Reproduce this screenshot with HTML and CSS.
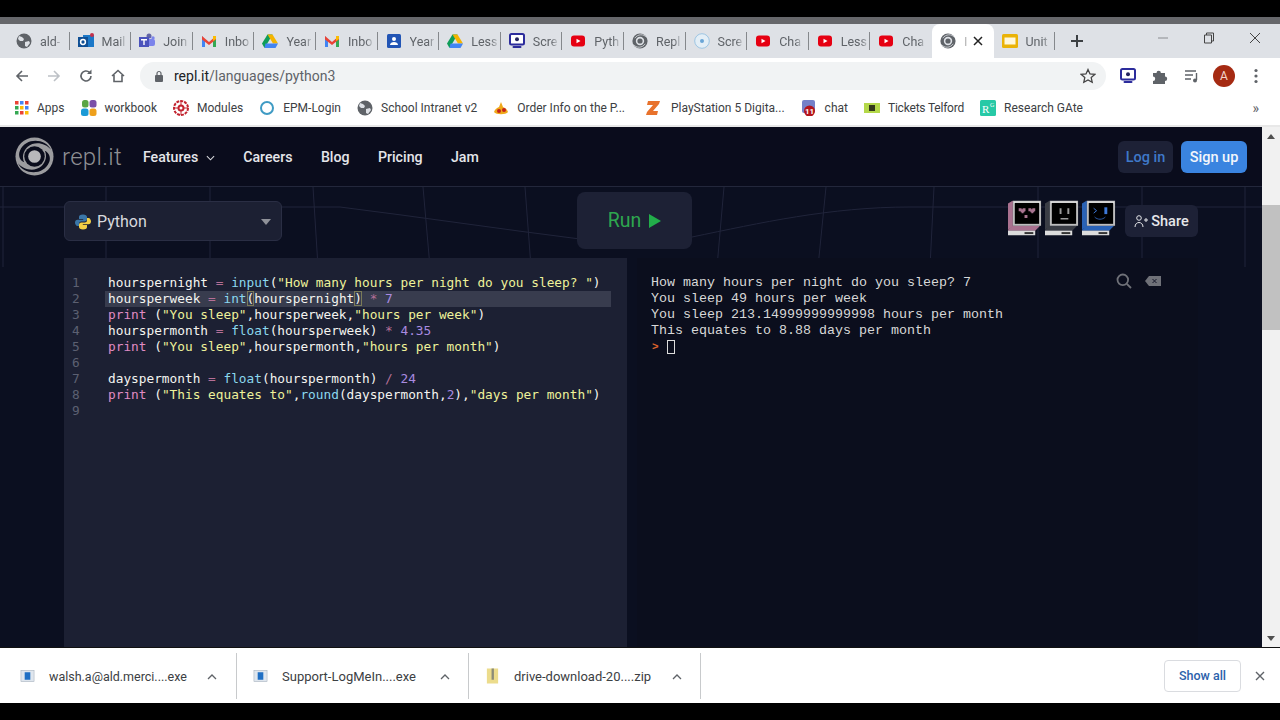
FILE: index.html
```html
<!DOCTYPE html>
<html lang="en">
<head>
  <meta charset="UTF-8">
  <title>repl.it - Python3</title>
  <link rel="stylesheet" href="styles.css">
</head>
<body>
  <svg class="defs" width="0" height="0">
    <symbol id="globe" viewBox="0 0 16 16"><circle cx="8" cy="8" r="7.5" fill="#5f6368"/><path d="M3 3l3 1 2 2-1 2-3 0-2-2zM9 9l4-1 1 2-3 4-2-1z" fill="#dee1e6"/></symbol>
    <symbol id="outlook" viewBox="0 0 16 16"><rect x="5" y="2" width="11" height="12" fill="#1b78c8"/><rect x="0" y="4" width="10" height="10" fill="#0f4f94"/><circle cx="5" cy="9" r="2.4" fill="none" stroke="#fff" stroke-width="1.5"/><circle cx="14" cy="2" r="2" fill="#c4314b"/></symbol>
    <symbol id="teams" viewBox="0 0 16 16"><circle cx="10" cy="3" r="2.5" fill="#6264a7"/><circle cx="14" cy="5" r="1.7" fill="#7b83eb"/><rect x="8" y="6" width="8" height="7" rx="2" fill="#7b83eb"/><rect x="0" y="4" width="10" height="10" fill="#4b53bc"/><path d="M2 6h6v1.400H5.700V12H4.300V7.400H2z" fill="#fff"/></symbol>
    <symbol id="gmail" viewBox="0 0 16 16"><path d="M1 3v11h3V7z" fill="#4285f4"/><path d="M15 3v11h-3V7z" fill="#34a853"/><path d="M1 3l7 6 7-6v3.500L8 12 1 6.500z" fill="#ea4335"/><path d="M12 3h3v3l-3 2z" fill="#fbbc04"/></symbol>
    <symbol id="drive" viewBox="0 0 16 16"><path d="M5.500 1.500h5L5 11 2.500 15 0 10.500z" fill="#0f9d58"/><path d="M10.500 1.500L16 10.500h-5L5.500 1.500z" fill="#f4b400"/><path d="M3.500 10.500H16L13.500 15h-11z" fill="#4285f4"/></symbol>
    <symbol id="classroom" viewBox="0 0 16 16"><rect x="1" y="1" width="14" height="14" rx="1.500" fill="#2255b5"/><circle cx="8" cy="6" r="2" fill="#fff"/><path d="M4 12c0-2 2-3 4-3s4 1 4 3z" fill="#fff"/></symbol>
    <symbol id="screen" viewBox="0 0 16 16"><rect x="1" y="1" width="14" height="10.500" rx="1.500" fill="#fff" stroke="#2c2c9c" stroke-width="2"/><circle cx="8" cy="6.200" r="2" fill="#23235f"/><rect x="3.500" y="13" width="9" height="2" rx="1" fill="#2c2c9c"/></symbol>
    <symbol id="youtube" viewBox="0 0 16 16"><rect x="1" y="2.500" width="14" height="11" rx="3" fill="#e60012"/><path d="M6.500 5.800v4.400L10.500 8z" fill="#fff"/></symbol>
    <symbol id="replfav" viewBox="0 0 40 40"><circle cx="20" cy="20" r="19" fill="#5f6368"/><circle cx="20" cy="20" r="10.500" fill="#dee1e6"/><circle cx="20" cy="20" r="6.500" fill="#5f6368"/><path d="M36 11C30 2 14 2 7 13M4 29c6 9 22 9 29-2" fill="none" stroke="#dee1e6" stroke-width="2"/></symbol>
    <symbol id="record" viewBox="0 0 16 16"><circle cx="8" cy="8" r="7.300" fill="#e3eef6" stroke="#9dc5e3"/><circle cx="8" cy="8" r="2" fill="#6aa5d6"/></symbol>
    <symbol id="slides" viewBox="0 0 16 16"><rect x="0" y="1" width="16" height="14" rx="1.500" fill="#eab308"/><rect x="2.500" y="4.500" width="11" height="7" fill="#fff8dc"/></symbol>
    <symbol id="logo" viewBox="0 0 40 40"><circle cx="20" cy="20" r="19.500" fill="#9c9c9f"/><circle cx="20" cy="20" r="10.500" fill="#0a0c1c"/><path d="M37 13C31 1 11 0 5 14 3 19 5 24 9.500 26 7 21 8 15 13 10 20 4 31 6 37 13z" fill="#0a0c1c"/><path d="M37 13C31 1 11 0 5 14 3 19 5 24 9.500 26 7 21 8 15 13 10 20 4 31 6 37 13z" fill="#0a0c1c" transform="rotate(180 20 20)"/><circle cx="20" cy="20" r="6.500" fill="#b8b8bb"/></symbol>
    <symbol id="monitor" viewBox="0 0 36 36"><path d="M0 3l5-3v27l-5 3z" fill="currentColor"/><path d="M0 30l5-4h28l-5 5H0z" fill="currentColor"/><rect x="5" y="0" width="29" height="26" fill="#bdbdbd"/><rect x="6" y="1" width="27" height="2" fill="#e4e4e4"/><rect x="7" y="2.500" width="25" height="21.500" fill="#000"/><rect x="0" y="31" width="28" height="5" fill="#dcdcdc"/><rect x="17" y="32.500" width="9" height="2" fill="#333"/></symbol>
  </svg>

  <div class="topbar"></div>
  <div class="tabstrip">
    <div class="tabs">
      <div class="tab"><svg class="fav"><use href="#globe"/></svg><span class="tab-title">ald-</span></div>
      <div class="tab"><svg class="fav"><use href="#outlook"/></svg><span class="tab-title">Mail</span></div>
      <div class="tab"><svg class="fav"><use href="#teams"/></svg><span class="tab-title">Join</span></div>
      <div class="tab"><svg class="fav"><use href="#gmail"/></svg><span class="tab-title">Inbo</span></div>
      <div class="tab"><svg class="fav"><use href="#drive"/></svg><span class="tab-title">Year</span></div>
      <div class="tab"><svg class="fav"><use href="#gmail"/></svg><span class="tab-title">Inbo</span></div>
      <div class="tab"><svg class="fav"><use href="#classroom"/></svg><span class="tab-title">Year</span></div>
      <div class="tab"><svg class="fav"><use href="#drive"/></svg><span class="tab-title">Less</span></div>
      <div class="tab"><svg class="fav"><use href="#screen"/></svg><span class="tab-title">Scre</span></div>
      <div class="tab"><svg class="fav"><use href="#youtube"/></svg><span class="tab-title">Pyth</span></div>
      <div class="tab"><svg class="fav"><use href="#replfav"/></svg><span class="tab-title">Repl</span></div>
      <div class="tab"><svg class="fav"><use href="#record"/></svg><span class="tab-title">Scre</span></div>
      <div class="tab"><svg class="fav"><use href="#youtube"/></svg><span class="tab-title">Cha</span></div>
      <div class="tab"><svg class="fav"><use href="#youtube"/></svg><span class="tab-title">Less</span></div>
      <div class="tab no-sep"><svg class="fav"><use href="#youtube"/></svg><span class="tab-title">Cha</span></div>
      <div class="tab active"><svg class="fav"><use href="#replfav"/></svg><span class="tab-title">I</span><svg class="tab-close" viewBox="0 0 10 10"><path d="M1 1l8 8M9 1L1 9" stroke="#222" stroke-width="1.500"/></svg></div>
      <div class="tab"><svg class="fav"><use href="#slides"/></svg><span class="tab-title">Unit</span></div>
    </div>
    <svg class="newtab" viewBox="0 0 14 14"><path d="M7 1v12M1 7h12" stroke="#3c4043" stroke-width="2"/></svg>
    <div class="winctl">
      <svg viewBox="0 0 12 12"><path d="M1 6h10" stroke="#8a8c90"/></svg>
      <svg viewBox="0 0 12 12"><path d="M3.500 3V1h7v8H8.500M1.500 3h7v8h-7z" fill="none" stroke="#444"/></svg>
      <svg viewBox="0 0 12 12"><path d="M1 1l10 10M11 1L1 11" stroke="#444"/></svg>
    </div>
  </div>

  <div class="toolbar">
    <svg class="tool" viewBox="0 0 16 16"><path d="M14 8H3M8 3L3 8l5 5" fill="none" stroke="#5f6368" stroke-width="1.600"/></svg>
    <svg class="tool" viewBox="0 0 16 16"><path d="M2 8h11M8 3l5 5-5 5" fill="none" stroke="#bdc1c6" stroke-width="1.600"/></svg>
    <svg class="tool" viewBox="0 0 16 16"><path d="M13 8a5 5 0 1 1-1.500-3.600" fill="none" stroke="#5f6368" stroke-width="1.600"/><path d="M13.500 1.500v4.500H9z" fill="#5f6368"/></svg>
    <svg class="tool" viewBox="0 0 16 16"><path d="M2 8l6-5.500L14 8M4 7v6.500h8V7" fill="none" stroke="#5f6368" stroke-width="1.600"/></svg>
    <div class="omnibox">
      <svg class="lock" viewBox="0 0 10 12"><rect x="1" y="5" width="8" height="7" rx="1" fill="#5f6368"/><path d="M3 5V3.500a2 2 0 0 1 4 0V5" fill="none" stroke="#5f6368" stroke-width="1.200"/></svg>
      <span class="url"><b>repl.it</b>/languages/python3</span>
      <svg class="star" viewBox="0 0 16 16"><path d="M8 1.500l2 4.400 4.800.5-3.600 3.200 1 4.700L8 11.900l-4.200 2.400 1-4.700L1.200 6.400 6 5.900z" fill="none" stroke="#444" stroke-width="1.300"/></svg>
    </div>
    <div class="extensions">
      <svg class="tool" viewBox="0 0 16 16"><use href="#screen"/></svg>
      <svg class="tool" viewBox="0 0 16 16"><path d="M1 5h3.500a2.200 2.200 0 1 1 4.400 0H13v3.500a2.200 2.200 0 1 1 0 4.400V16H1v-3a2.200 2.200 0 1 0 0-4.400z" fill="#5f6368"/></svg>
      <svg class="tool" viewBox="0 0 16 16"><path d="M1 3h11M1 7h8M1 11h6" stroke="#5f6368" stroke-width="1.400"/><path d="M12.500 5v7" stroke="#5f6368" stroke-width="1.400"/><circle cx="11" cy="12.500" r="2" fill="#5f6368"/></svg>
      <span class="avatar">A</span>
      <svg class="dots" viewBox="0 0 4 16"><circle cx="2" cy="2.500" r="1.600" fill="#5f6368"/><circle cx="2" cy="8" r="1.600" fill="#5f6368"/><circle cx="2" cy="13.500" r="1.600" fill="#5f6368"/></svg>
    </div>
  </div>

  <div class="bookmarks">
    <a class="bm"><svg class="apps" viewBox="0 0 14 14"><rect width="3.500" height="3.500" fill="#ea4335"/><rect x="5" width="3.500" height="3.500" fill="#4285f4"/><rect x="10" width="3.500" height="3.500" fill="#ea4335"/><rect y="5" width="3.500" height="3.500" fill="#34a853"/><rect x="5" y="5" width="3.500" height="3.500" fill="#fbbc04"/><rect x="10" y="5" width="3.500" height="3.500" fill="#4285f4"/><rect y="10" width="3.500" height="3.500" fill="#34a853"/><rect x="5" y="10" width="3.500" height="3.500" fill="#ea4335"/><rect x="10" y="10" width="3.500" height="3.500" fill="#fbbc04"/></svg>Apps</a>
    <a class="bm"><svg class="fav" viewBox="0 0 16 16"><rect x="1" y="0" width="6.500" height="7.500" rx="2.500" fill="#5aa545"/><rect x="8.500" y="0" width="7" height="7.500" rx="2.500" fill="#7a4fa8"/><rect x="0" y="8.500" width="7.500" height="7.500" rx="2.500" fill="#1b9ad6"/><rect x="8.500" y="8.500" width="7" height="7.500" rx="2.500" fill="#eea01c"/></svg>workbook</a>
    <a class="bm"><svg class="fav" viewBox="0 0 16 16"><circle cx="8" cy="8" r="7" fill="none" stroke="#c2232e" stroke-width="2" stroke-dasharray="3 1"/><circle cx="8" cy="8" r="2.500" fill="none" stroke="#c2232e" stroke-width="2"/><path d="M8 1v4M8 11v4M1 8h4M11 8h4" stroke="#c2232e"/></svg>Modules</a>
    <a class="bm"><svg class="fav" viewBox="0 0 16 16"><circle cx="8" cy="8" r="6" fill="none" stroke="#3f9bc4" stroke-width="2"/></svg>EPM-Login</a>
    <a class="bm"><svg class="fav"><use href="#globe"/></svg>School Intranet v2</a>
    <a class="bm bm-wide"><svg class="fav" viewBox="0 0 16 16"><path d="M1 12c1-3 3-4 5-5l2-5 2 5c2 1 4 2 5 5-2 3-12 3-14 0z" fill="#efa91b"/><circle cx="6" cy="11" r="2" fill="#c5231c"/><circle cx="11" cy="10" r="2" fill="#c5231c"/></svg>Order Info on the P...</a>
    <a class="bm bm-z"><svg class="fav" viewBox="0 0 16 16"><path d="M3 1h12l-1 3-6 7h5l-1 4H1l1-3 6-7H2z" fill="#e8722c"/></svg>PlayStation 5 Digita...</a>
    <a class="bm"><svg class="fav" viewBox="0 0 16 16"><rect x="1" y="0" width="13" height="13" rx="2" fill="#7480c8"/><circle cx="8.500" cy="11" r="5.500" fill="#b3141c"/><text x="8.500" y="14" font-size="8" font-family="Roboto, sans-serif" font-weight="700" fill="#fff" text-anchor="middle">11</text></svg>chat</a>
    <a class="bm bm-tight"><svg class="fav" viewBox="0 0 16 16"><rect x="0" y="3" width="16" height="10" fill="#b4d84a"/><rect x="5" y="5" width="6" height="6" fill="#33381c"/></svg>Tickets Telford</a>
    <a class="bm"><svg class="fav" viewBox="0 0 16 16"><rect width="16" height="16" rx="1.500" fill="#27c9a6"/><text x="2" y="13" font-size="11" font-family="Liberation Serif, serif" fill="#fff">R</text><text x="10" y="7" font-size="6" font-family="Liberation Serif, serif" fill="#fff">G</text></svg>Research GAte</a>
    <span class="bm-more">&raquo;</span>
  </div>

  <div class="viewport">
    <div class="page">
      <nav class="nav">
        <svg class="logo"><use href="#logo"/></svg>
        <span class="wordmark">repl.it</span>
        <ul class="nav-links">
          <li>Features <svg class="caret" viewBox="0 0 10 6"><path d="M1 1l4 4 4-4" fill="none" stroke="#d8d9de" stroke-width="1.200"/></svg></li>
          <li>Careers</li>
          <li>Blog</li>
          <li>Pricing</li>
          <li>Jam</li>
        </ul>
        <div class="nav-auth">
          <button class="btn-login">Log in</button>
          <button class="btn-signup">Sign up</button>
        </div>
      </nav>

      <main class="workspace">
        <svg class="gridlines" viewBox="0 0 1262 460">
          <g fill="none" stroke="#20243a">
            <path d="M0 20h340C420 30 500 42 580 52M692 50C760 36 830 20 910 20H1262"/>
            <path d="M3 0v80M106 0v80M210 0v80M313 0l5 80M423 0l7 80M525 0l6 80M724 0l-7 80M826 0l-8 80M934 0l-4 80M1038 0v80M1142 0v80M1245 0v80"/>
          </g>
        </svg>
        <div class="controls">
          <div class="lang-select">
            <svg class="py-icon" viewBox="0 0 16 16"><path d="M8 .5c-3 0-4 1-4 2.500V5h4.200v.8H2.500C1 5.800 0 7 0 8.500S1 12 2.500 12H4V9.800C4 8.500 5 7.500 6.200 7.500h3.600c1.200 0 2.200-1 2.200-2.200V3C12 1.500 10.500.5 8 .5z" fill="#3a76a8"/><path d="M8 15.500c3 0 4-1 4-2.500V11H7.800v-.8h5.700c1.500 0 2.500-1.200 2.500-2.700S15 4 13.500 4H12v2.200c0 1.300-1 2.300-2.200 2.300H6.200C5 8.500 4 9.500 4 10.700V13c0 1.500 1.500 2.500 4 2.500z" fill="#f2cf45"/></svg>
            <span>Python</span>
            <span class="select-arrow"></span>
          </div>
          <button class="btn-run">Run <svg viewBox="0 0 12 14"><path d="M0 0l12 7-12 7z" fill="#22ad4a"/></svg></button>
          <div class="share-group">
            <div class="avatars">
              <svg class="mon pink" viewBox="0 0 36 36"><use href="#monitor"/><path d="M11 8h3v1h1V8h3v3h-1v1h-1v1h-2v-1h-1v-1h-2zM21 8h3v1h1V8h3v3h-1v1h-1v1h-2v-1h-1v-1h-2zM17 15h3v3h-3z" fill="#a87490"/></svg>
              <svg class="mon gray" viewBox="0 0 36 36"><use href="#monitor"/><path d="M15 8h2v6h-2zM23 8h2v6h-2zM16 18h8v1.500h-8z" fill="#9a9a9a"/></svg>
              <svg class="mon blue" viewBox="0 0 36 36"><use href="#monitor"/><path d="M12 8l3 2.500-3 2.500" fill="none" stroke="#3d78d8"/><path d="M23 7h3v7h-3z" fill="#3d78d8"/><path d="M13 17c3 3 8 3 11 0" fill="none" stroke="#2b5aa8"/></svg>
            </div>
            <button class="btn-share"><svg viewBox="0 0 14 14"><circle cx="5" cy="4" r="2.300" fill="none" stroke="#e6e7ea"/><path d="M1 13c0-3 2-4.500 4-4.500S9 10 9 13M10 6h4M12 4v4" fill="none" stroke="#e6e7ea"/></svg>Share</button>
          </div>
        </div>

        <div class="panels">
          <section class="editor">
            <div class="code-row"><span class="ln">1</span><code>hourspernight <i class="op">=</i> <i class="fn">input</i>(<i class="str">"How many hours per night do you sleep? "</i>)</code></div>
            <div class="code-row current"><span class="ln">2</span><code>hoursperweek <i class="op">=</i> <i class="fn">int</i><i class="match">(</i>hourspernight<i class="match">)</i> <i class="op">*</i> <i class="num">7</i></code></div>
            <div class="code-row"><span class="ln">3</span><code><i class="kw">print</i> (<i class="str">"You sleep"</i>,hoursperweek,<i class="str">"hours per week"</i>)</code></div>
            <div class="code-row"><span class="ln">4</span><code>hourspermonth <i class="op">=</i> <i class="fn">float</i>(hoursperweek) <i class="op">*</i> <i class="num">4.35</i></code></div>
            <div class="code-row"><span class="ln">5</span><code><i class="kw">print</i> (<i class="str">"You sleep"</i>,hourspermonth,<i class="str">"hours per month"</i>)</code></div>
            <div class="code-row"><span class="ln">6</span><code></code></div>
            <div class="code-row"><span class="ln">7</span><code>dayspermonth <i class="op">=</i> <i class="fn">float</i>(hourspermonth) <i class="op">/</i> <i class="num">24</i></code></div>
            <div class="code-row"><span class="ln">8</span><code><i class="kw">print</i> (<i class="str">"This equates to"</i>,<i class="fn">round</i>(dayspermonth,<i class="num">2</i>),<i class="str">"days per month"</i>)</code></div>
            <div class="code-row"><span class="ln">9</span><code></code></div>
          </section>
          <section class="console">
            <div class="console-tools">
              <svg viewBox="0 0 16 16"><circle cx="6.800" cy="6.800" r="5.300" fill="none" stroke="#6f7178" stroke-width="1.800"/><path d="M10.800 10.800L15 15" stroke="#6f7178" stroke-width="1.800"/></svg>
              <svg viewBox="0 0 16 10"><path d="M4 0h12v10H4L0 5z" fill="#6f7178"/><path d="M7.500 3l4 4M11.500 3l-4 4" stroke="#15172a"/></svg>
            </div>
            <div class="output">How many hours per night do you sleep? 7</div>
            <div class="output">You sleep 49 hours per week</div>
            <div class="output">You sleep 213.14999999999998 hours per month</div>
            <div class="output">This equates to 8.88 days per month</div>
            <div class="prompt"><span class="chevron">&gt;</span><span class="cursor"></span></div>
          </section>
        </div>
      </main>
    </div>
    <div class="scrollbar">
      <span class="arrow up"></span>
      <div class="thumb"></div>
      <span class="arrow down"></span>
    </div>
  </div>

  <div class="shelf">
    <div class="dl"><svg class="dl-icon" viewBox="0 0 16 16"><rect x="1" y="2" width="14" height="12" fill="#dfe6ee" stroke="#a5b0bc" stroke-width=".6"/><rect x="5" y="4" width="6" height="8" fill="#1f6fc4"/></svg><span class="dl-name">walsh.a@ald.merci....exe</span><svg class="chev" viewBox="0 0 10 6"><path d="M1 5l4-4 4 4" fill="none" stroke="#5f6368" stroke-width="1.300"/></svg></div>
    <div class="dl"><svg class="dl-icon" viewBox="0 0 16 16"><rect x="1" y="2" width="14" height="12" fill="#dfe6ee" stroke="#a5b0bc" stroke-width=".6"/><rect x="5" y="4" width="6" height="8" fill="#1f6fc4"/></svg><span class="dl-name">Support-LogMeIn....exe</span><svg class="chev" viewBox="0 0 10 6"><path d="M1 5l4-4 4 4" fill="none" stroke="#5f6368" stroke-width="1.300"/></svg></div>
    <div class="dl"><svg class="dl-icon" viewBox="0 0 16 16"><rect x="2" y="0" width="12" height="16" fill="#ecdc8c"/><rect x="7" y="0" width="2.500" height="12" fill="#8c8c78"/></svg><span class="dl-name">drive-download-20....zip</span><svg class="chev" viewBox="0 0 10 6"><path d="M1 5l4-4 4 4" fill="none" stroke="#5f6368" stroke-width="1.300"/></svg></div>
    <button class="show-all">Show all</button>
    <svg class="shelf-close" viewBox="0 0 10 10"><path d="M1 1l8 8M9 1L1 9" stroke="#5f6368" stroke-width="1.400"/></svg>
  </div>
  <div class="bottombar"></div>
</body>
</html>
```

FILE: styles.css
```css
* { box-sizing: border-box; }
html, body { height: 100%; }
body { margin: 0; width: 1280px; height: 720px; overflow: hidden; background: #000; font-family: Roboto, sans-serif; display: flex; flex-direction: column; }
.defs { position: absolute; }
i { font-style: normal; }
button { font-family: inherit; border: none; }

/* browser chrome */
.topbar { height: 24px; flex: none; background: linear-gradient(#000 17px, #66676b 17px); }
.tabstrip { height: 34px; flex: none; background: #dee1e6; display: flex; align-items: center; padding-left: 8px; }
.tabs { display: flex; height: 100%; }
.tab { width: 61.6px; height: 100%; display: flex; align-items: center; padding-left: 8px; position: relative; font-size: 12.5px; color: #5f6368; }
.tab::after { content: ""; position: absolute; right: 0; top: 8px; bottom: 8px; width: 1px; background: #85888c; }
.tab.no-sep::after, .tab.active::after { display: none; }
.tab.active { background: #fff; border-radius: 8px 8px 0 0; }
.fav { width: 16px; height: 16px; flex: none; }
.apps { width: 14px; height: 14px; flex: none; }
.tab-title { margin-left: 8px; white-space: nowrap; -webkit-mask-image: linear-gradient(90deg, #000 75%, rgba(0,0,0,.25)); mask-image: linear-gradient(90deg, #000 75%, rgba(0,0,0,.25)); }
.tab.active .tab-title { width: 8px; color: #b5b5b5; }
.tab-close { width: 10px; height: 10px; margin-left: 1px; }
.newtab { width: 14px; height: 14px; margin-left: 15px; }
.winctl { margin-left: auto; display: flex; gap: 34px; padding-right: 19px; margin-top: -6px; }
.winctl svg { width: 12px; height: 12px; }

.toolbar { height: 35px; flex: none; background: #fff; display: flex; align-items: center; padding-left: 14px; }
.toolbar > .tool { width: 16px; height: 16px; margin-right: 16px; }
.omnibox { width: 966px; height: 28px; margin-left: -2px; background: #f1f3f4; border-radius: 14px; display: flex; align-items: center; padding: 0 10px 0 14px; }
.lock { width: 10px; height: 12px; }
.url { margin-left: 10px; font-size: 14px; color: #5f6368; }
.url b { font-weight: 400; color: #202124; }
.star { width: 16px; height: 16px; margin-left: auto; }
.extensions { display: flex; align-items: center; }
.extensions .tool { width: 16px; height: 16px; margin-left: 16px; }
.extensions .tool:first-child { margin-left: 14px; }
.avatar { width: 22px; height: 22px; margin-left: 13px; border-radius: 50%; background: #a52a12; color: #f3d5cc; font-size: 12px; display: flex; align-items: center; justify-content: center; }
.dots { width: 4px; height: 16px; margin-left: 19px; }

.bookmarks { height: 34px; flex: none; background: #fff; border-bottom: 2px solid #e8e8e8; display: flex; align-items: center; padding: 0 0 2px 15px; position: relative; font-size: 12px; color: #3c4043; }
.bm { display: flex; align-items: center; gap: 8px; margin-right: 16px; white-space: nowrap; }
.bm-wide { margin-right: 20px; }
.bm-z { gap: 10px; }
.bm-tight { letter-spacing: -.2px; }
.bm-more { position: absolute; right: 21px; font-size: 14px; color: #5f6368; }

/* repl.it page */
.viewport { height: 520px; flex: none; display: flex; background: #0b0f20; }
.page { flex: 1; min-width: 0; display: flex; flex-direction: column; overflow: hidden; }
.nav { height: 60px; flex: none; background: #0a0c1c; display: flex; align-items: center; padding: 0 15px; border-bottom: 1px solid #23273b; }
.logo { width: 39px; height: 39px; }
.wordmark { margin-left: 8px; font-size: 24px; font-weight: 300; color: #8f9094; letter-spacing: .3px; }
.nav-links { list-style: none; display: flex; gap: 28.4px; margin: 0 0 0 21px; padding: 0; font-size: 14.2px; font-weight: 500; color: #e4e5ea; }
.caret { width: 9px; height: 6px; margin: 0 0 1px 4px; }
.nav-auth { margin-left: auto; display: flex; gap: 8px; }
.nav-auth button { height: 32px; border-radius: 6px; font-size: 14.5px; font-weight: 500; padding-top: 2px; }
.btn-login { width: 55px; background: #1d2136; color: #3f79c9; }
.btn-signup { width: 66px; background: #3a84e0; color: #f3f6fb; }

.workspace { flex: 1; min-height: 0; position: relative; padding: 5px 64px 0; background: #0b0f20; display: flex; flex-direction: column; }
.gridlines { position: absolute; left: 0; top: 0; width: 1262px; height: 460px; }
.controls { position: relative; display: grid; grid-template-columns: 513px 115px 1fr; align-items: center; height: 57px; }
.lang-select { width: 218px; height: 40px; background: #1c2033; border: 1px solid #2a2e44; border-radius: 6px; display: flex; align-items: center; padding: 2px 10px 0; gap: 6px; font-size: 16px; color: #d8d9de; }
.py-icon { width: 16px; height: 16px; }
.select-arrow { margin-left: auto; border-left: 5px solid transparent; border-right: 5px solid transparent; border-top: 6px solid #8f9199; }
.btn-run { height: 57px; border-radius: 8px; background: #1d2135; color: #2ea64f; font-size: 19.5px; display: flex; align-items: center; justify-content: center; gap: 8px; }
.btn-run svg { width: 12px; height: 14px; }
.share-group { justify-self: end; display: flex; align-items: center; gap: 8px; }
.avatars { display: flex; gap: 2px; margin-top: -6px; }
.mon { width: 35px; height: 36px; }
.pink { color: #a9718f; }
.gray { color: #3a3d45; }
.blue { color: #2a62b5; }
.btn-share { width: 73px; height: 32px; border-radius: 6px; background: #1d2136; color: #e6e7ea; font-size: 14.5px; font-weight: 500; display: flex; align-items: center; justify-content: center; gap: 3px; padding-top: 2px; }
.btn-share svg { width: 14px; height: 14px; }

.panels { position: relative; flex: 1; min-height: 0; display: grid; grid-template-columns: 563px 561px; gap: 10px; margin-top: 9px; width: 1134px; }
.editor { background: #1c2033; padding-top: 17px; font-family: "DejaVu Sans Mono", monospace; font-size: 12.79px; line-height: 16px; }
.code-row { display: flex; height: 16px; margin-right: 16px; }
.ln { width: 41px; flex: none; padding-left: 8px; color: #5c6072; }
.code-row code { font-family: inherit; white-space: pre; color: #f4f4f0; flex: 1; padding-left: 3px; }
.current code { background: #383c4e; }
.op { color: #b56f97; }
.fn { color: #8bd8ee; }
.str { color: #eef29a; }
.kw { color: #e08cc4; }
.num { color: #a98be0; }
.match { outline: 1px solid #7a7a58; outline-offset: -1px; }

.console { position: relative; background: #0b0e1d; padding: 17px 14px; font-family: "Liberation Mono", monospace; font-size: 13.33px; line-height: 16px; color: #d8d8d8; }
.console-tools { position: absolute; right: 37px; top: 15px; display: flex; align-items: center; gap: 13px; }
.console-tools svg:first-child { width: 16px; height: 16px; }
.console-tools svg:last-child { width: 16px; height: 10px; }
.output { white-space: pre; }
.prompt { display: flex; align-items: center; height: 16px; }
.chevron { color: #e0662c; font-size: 11px; font-weight: 700; width: 16px; padding-left: 1px; }
.cursor { width: 8px; height: 14px; border: 1px solid #dcdcdc; }

.scrollbar { width: 18px; flex: none; background: #f1f1f1; position: relative; }
.thumb { position: absolute; left: 0; right: 0; top: 78px; height: 125px; background: #c1c1c1; }
.arrow { position: absolute; left: 5px; border-left: 4px solid transparent; border-right: 4px solid transparent; }
.arrow.up { top: 7px; border-bottom: 5px solid #505050; }
.arrow.down { bottom: 6px; border-top: 5px solid #505050; }

/* downloads */
.shelf { height: 56px; flex: none; background: #fff; border-top: 1px solid #111; display: flex; align-items: center; position: relative; }
.dl { width: 232px; height: 46px; border-right: 1px solid #c8cacc; display: flex; align-items: center; padding: 2px 0 0 16px; font-size: 13px; color: #3c4043; }
.dl:first-child { width: 237px; padding-left: 20px; font-size: 12.5px; }
.dl-icon { width: 15px; height: 16px; flex: none; margin-bottom: 2px; }
.dl-name { margin-left: 14px; width: 138px; white-space: nowrap; }
.chev { width: 10px; height: 6px; margin-left: 20px; }
.show-all { margin-left: auto; width: 77px; height: 32px; background: #fff; border: 1px solid #dadce0; border-radius: 4px; color: #2c62ab; font-size: 12.5px; font-weight: 500; }
.shelf-close { width: 10px; height: 10px; margin: 0 15px 0 14px; }
.bottombar { height: 17px; flex: none; background: #000; }
```
